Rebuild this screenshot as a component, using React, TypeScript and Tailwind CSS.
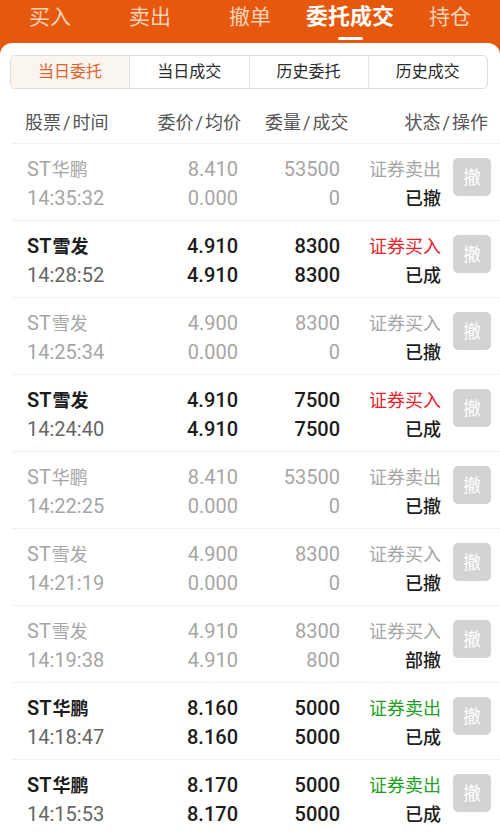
import React from "react";

interface Order {
  name: string;
  time: string;
  price: string;
  avg: string;
  qty: string;
  done: string;
  side: "buy" | "sell";
  status: string;
  active: boolean;
}

const orders: Order[] = [
  { name: "华鹏", time: "14:35:32", price: "8.410", avg: "0.000", qty: "53500", done: "0", side: "sell", status: "已撤", active: false },
  { name: "雪发", time: "14:28:52", price: "4.910", avg: "4.910", qty: "8300", done: "8300", side: "buy", status: "已成", active: true },
  { name: "雪发", time: "14:25:34", price: "4.900", avg: "0.000", qty: "8300", done: "0", side: "buy", status: "已撤", active: false },
  { name: "雪发", time: "14:24:40", price: "4.910", avg: "4.910", qty: "7500", done: "7500", side: "buy", status: "已成", active: true },
  { name: "华鹏", time: "14:22:25", price: "8.410", avg: "0.000", qty: "53500", done: "0", side: "sell", status: "已撤", active: false },
  { name: "雪发", time: "14:21:19", price: "4.900", avg: "0.000", qty: "8300", done: "0", side: "buy", status: "已撤", active: false },
  { name: "雪发", time: "14:19:38", price: "4.910", avg: "4.910", qty: "8300", done: "800", side: "buy", status: "部撤", active: false },
  { name: "华鹏", time: "14:18:47", price: "8.160", avg: "8.160", qty: "5000", done: "5000", side: "sell", status: "已成", active: true },
  { name: "华鹏", time: "14:15:53", price: "8.170", avg: "8.170", qty: "5000", done: "5000", side: "sell", status: "已成", active: true },
];

const navItems = ["买入", "卖出", "撤单", "委托成交", "持仓"];
const subTabs = ["当日委托", "当日成交", "历史委托", "历史成交"];

function OrderRow({ o }: { o: Order }) {
  // 未成交的委托整行置灰，只有状态文字保持黑色
  const main = o.active ? "text-[#1c1c1c] font-medium" : "text-[#a6a6a6]";
  const sideColor = !o.active
    ? "text-[#a6a6a6]"
    : o.side === "buy"
    ? "text-[#e4262b]"
    : "text-[#1fa01f]";

  return (
    <div className="ml-3 h-[77px] border-b border-[#f1f1f1]">
      <div className="flex items-start pt-[11px] text-[20px] leading-[29px]">
        <div className="w-[103px] pl-[15px] shrink-0">
          <div className={o.active ? "text-[#1c1c1c] font-semibold" : "text-[#a6a6a6]"}>
            ST<span className="text-[18px] ml-[1px]">{o.name}</span>
          </div>
          <div className={o.active ? "text-[#666]" : "text-[#a6a6a6]"}>{o.time}</div>
        </div>
        <div className={`w-[123px] shrink-0 text-right ${main}`}>
          <div>{o.price}</div>
          <div>{o.avg}</div>
        </div>
        <div className={`w-[102px] shrink-0 text-right ${main}`}>
          <div>{o.qty}</div>
          <div>{o.done}</div>
        </div>
        <div className="w-[101px] shrink-0 text-right text-[18px]">
          <div className={sideColor}>{o.side === "buy" ? "证券买入" : "证券卖出"}</div>
          <div className="text-[#1c1c1c] font-medium">{o.status}</div>
        </div>
        <div className="ml-3 mt-[3px] w-[38px] h-[38px] shrink-0 rounded-[5px] bg-[#d3d3d3] flex items-center justify-center text-white text-[18px]">
          撤
        </div>
      </div>
    </div>
  );
}

export default function App() {
  return (
    <div
      className="w-[500px] h-[836px] overflow-hidden bg-[#e5580d]"
      style={{ fontFamily: "Roboto, 'Noto Sans CJK SC', sans-serif" }}
    >
      {/* 顶部导航 */}
      <div className="flex h-[43px]">
        {navItems.map((n) => {
          const on = n === "委托成交";
          return (
            <div key={n} className="w-[100px] flex flex-col items-center pt-[4px]">
              <div className={on ? "text-white text-[22px] font-semibold leading-[26px]" : "text-[#fdd3b9] text-[21px] leading-[26px]"}>
                {n}
              </div>
              {on && <div className="mt-[7px] w-[25px] h-[3px] rounded-full bg-white" />}
            </div>
          );
        })}
      </div>

      <div className="bg-white rounded-t-[12px] h-[793px]">
        {/* 子标签 */}
        <div className="pt-3 pl-[10px] pr-[12px]">
          <div className="flex h-[34px] border border-[#dedede] rounded-[5px] overflow-hidden">
            {subTabs.map((t, i) => (
              <div
                key={t}
                className={`flex-1 flex items-center justify-center text-[16px] ${
                  i > 0 ? "border-l border-[#e6e6e6]" : ""
                } ${i === 0 ? "bg-[#fbf5f0] text-[#e2622d]" : "text-[#2a2a2a]"}`}
              >
                {t}
              </div>
            ))}
          </div>
        </div>

        {/* 表头 */}
        <div className="ml-3 h-[55px] border-b border-[#f1f1f1] flex pt-[22px] text-[18px] leading-[24px] text-[#555]">
          <div className="w-[130px] pl-[13px]">股票<span className="mx-[2px]">/</span>时间</div>
          <div className="w-[99px] text-right">委价<span className="mx-[2px]">/</span>均价</div>
          <div className="w-[120px] pl-[24px]">委量<span className="mx-[2px]">/</span>成交</div>
          <div className="flex-1 text-right pr-[12px]">状态<span className="mx-[2px]">/</span>操作</div>
        </div>

        {orders.map((o, i) => (
          <OrderRow key={i} o={o} />
        ))}
      </div>
    </div>
  );
}
